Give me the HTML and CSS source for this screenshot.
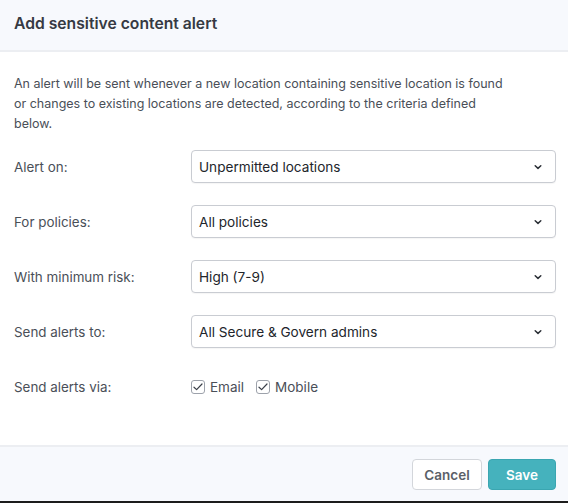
FILE: index.html
```html
<!DOCTYPE html>
<html>
<head>
<meta charset="utf-8">
<link rel="stylesheet" href="styles.css">
</head>
<body>
<div class="dialog">
  <div class="header">
    <h1 class="title">Add sensitive content alert</h1>
  </div>
  <div class="content">
    <p class="intro">An alert will be sent whenever a new location containing sensitive location is found or changes to existing locations are detected, according to the criteria defined below.</p>
    <div class="form">
      <div class="row">
        <span class="label">Alert on:</span>
        <div class="select"><span>Unpermitted locations</span><svg class="chev" width="8" height="6" viewBox="0 0 8 6"><path d="M1.2 1.8 L4 4.4 L6.8 1.8" fill="none" stroke="#2b2f36" stroke-width="1.5" stroke-linecap="round" stroke-linejoin="round"/></svg></div>
      </div>
      <div class="row">
        <span class="label">For policies:</span>
        <div class="select"><span>All policies</span><svg class="chev" width="8" height="6" viewBox="0 0 8 6"><path d="M1.2 1.8 L4 4.4 L6.8 1.8" fill="none" stroke="#2b2f36" stroke-width="1.5" stroke-linecap="round" stroke-linejoin="round"/></svg></div>
      </div>
      <div class="row">
        <span class="label">With minimum risk:</span>
        <div class="select"><span>High (7-9)</span><svg class="chev" width="8" height="6" viewBox="0 0 8 6"><path d="M1.2 1.8 L4 4.4 L6.8 1.8" fill="none" stroke="#2b2f36" stroke-width="1.5" stroke-linecap="round" stroke-linejoin="round"/></svg></div>
      </div>
      <div class="row">
        <span class="label">Send alerts to:</span>
        <div class="select"><span>All Secure &amp; Govern admins</span><svg class="chev" width="8" height="6" viewBox="0 0 8 6"><path d="M1.2 1.8 L4 4.4 L6.8 1.8" fill="none" stroke="#2b2f36" stroke-width="1.5" stroke-linecap="round" stroke-linejoin="round"/></svg></div>
      </div>
      <div class="row row-check">
        <span class="label">Send alerts via:</span>
        <div class="checks">
          <label class="check"><span class="box"><svg width="10" height="8" viewBox="0 0 10 8"><path d="M1 4.2 L3.6 6.6 L9 1" fill="none" stroke="#3a3f48" stroke-width="1.2" stroke-linecap="round" stroke-linejoin="round"/></svg></span>Email</label>
          <label class="check"><span class="box"><svg width="10" height="8" viewBox="0 0 10 8"><path d="M1 4.2 L3.6 6.6 L9 1" fill="none" stroke="#3a3f48" stroke-width="1.2" stroke-linecap="round" stroke-linejoin="round"/></svg></span>Mobile</label>
        </div>
      </div>
    </div>
  </div>
  <div class="footer">
    <button class="btn btn-cancel">Cancel</button>
    <button class="btn btn-save">Save</button>
  </div>
</div>
</body>
</html>
```

FILE: styles.css
```css
* { box-sizing: border-box; }
html, body { margin: 0; padding: 0; background: #ffffff; }
body {
  font-family: Inter, "Noto Sans", "Liberation Sans", sans-serif;
  color: #4a4f58;
  width: 568px;
  height: 503px;
  overflow: hidden;
}
.dialog {
  width: 568px;
  height: 503px;
  display: flex;
  flex-direction: column;
  border-bottom: 2px solid #1c1c1c;
}
.header {
  height: 52px;
  background: #f7f9fd;
  border-bottom: 2px solid #eceef2;
  padding: 0 14px;
  display: flex;
  align-items: center;
}
.title {
  margin: 0;
  font-size: 15.7px;
  font-weight: 600;
  color: #363a43;
  padding-bottom: 4px;
}
.content {
  flex: 1;
  padding: 22px 12px 0 14px;
}
.intro {
  margin: 0;
  max-width: 500px;
  font-size: 12.5px;
  line-height: 20px;
  color: #4a4f58;
}
.form {
  margin-top: 16px;
  display: flex;
  flex-direction: column;
  gap: 22px;
}
.row {
  display: flex;
  align-items: center;
}
.label {
  width: 177px;
  font-size: 13.4px;
  color: #4a4f58;
}
.select {
  flex: 1;
  height: 33px;
  border: 1px solid #c9ccd2;
  border-radius: 4px;
  display: flex;
  align-items: center;
  justify-content: space-between;
  padding: 0 13px 0 7px;
  font-size: 13.6px;
  color: #22252b;
  background: #fff;
  box-shadow: 0 1px 1px rgba(0,0,0,0.04);
}
.chev { display: block; }
.row-check { margin-top: 7px; height: 20px; }
.checks {
  display: flex;
  gap: 12px;
  align-items: center;
}
.check {
  display: flex;
  align-items: center;
  font-size: 13.5px;
  color: #4a4f58;
  gap: 5px;
}
.box {
  width: 14px;
  height: 14px;
  border: 1px solid #9da2ab;
  border-radius: 3px;
  display: flex;
  align-items: center;
  justify-content: center;
}
.box svg { display: block; }
.footer {
  height: 56px;
  background: #f7f9fd;
  border-top: 2px solid #eceef2;
  display: flex;
  justify-content: flex-end;
  align-items: center;
  gap: 6px;
  padding: 1px 12px 0 0;
}
.btn {
  height: 31px;
  border-radius: 4px;
  font-family: Inter, "Noto Sans", "Liberation Sans", sans-serif;
  font-size: 13.5px;
  font-weight: 600;
  cursor: pointer;
}
.btn-cancel {
  width: 70px;
  background: #ffffff;
  border: 1px solid #d3d6db;
  color: #5a5f68;
}
.btn-save {
  width: 68px;
  background: #45b2bd;
  border: 1px solid #3aa6b1;
  color: #ffffff;
}
```
